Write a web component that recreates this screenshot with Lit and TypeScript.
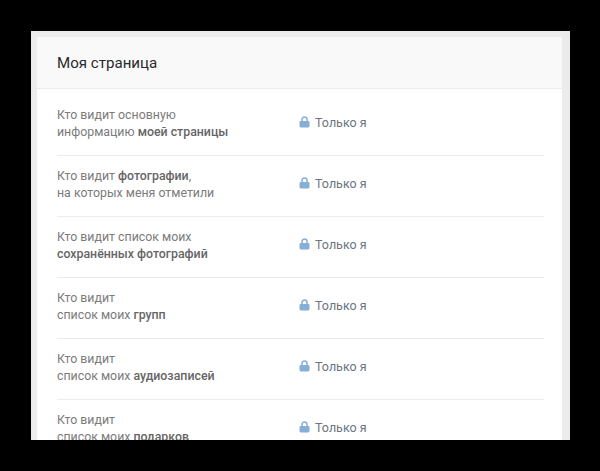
import { LitElement, html, css } from "lit";
import { customElement } from "lit/decorators.js";

const rows = [
  [html`Кто видит основную`, html`информацию <b>моей страницы</b>`],
  [html`Кто видит <b>фотографии</b>,`, html`на которых меня отметили`],
  [html`Кто видит список моих`, html`<b>сохранённых фотографий</b>`],
  [html`Кто видит`, html`список моих <b>групп</b>`],
  [html`Кто видит`, html`список моих <b>аудиозаписей</b>`],
  [html`Кто видит`, html`список моих <b>подарков</b>`],
];

@customElement("app-root")
export class AppRoot extends LitElement {
  static styles = css`
    :host {
      display: block;
      width: 600px;
      height: 471px;
      background: #000;
      box-sizing: border-box;
      padding: 31px 30px 31px 31px;
      font-family: Roboto, "Liberation Sans", sans-serif;
      overflow: hidden;
    }
    .panel {
      height: 409px;
      box-sizing: border-box;
      background: #ececec;
      padding: 6px 8px 0 6px;
      overflow: hidden;
    }
    .card {
      background: #fff;
    }
    .head {
      height: 52px;
      box-sizing: border-box;
      background: #f9f9f9;
      border-bottom: 1px solid #ebebeb;
      padding: 1px 20px 0;
      display: flex;
      align-items: center;
      font-size: 15.1px;
      color: #2a2a2a;
    }
    .list {
      padding: 6px 18px 0 20px;
    }
    .row {
      height: 61px;
      box-sizing: border-box;
      border-bottom: 1px solid #ebebeb;
      display: flex;
      align-items: center;
      padding-bottom: 3px;
    }
    .label {
      width: 242px;
      font-size: 12.35px;
      line-height: 17px;
      color: #7b7b7b;
    }
    .label b {
      font-weight: 500;
      color: #666;
    }
    .value {
      display: flex;
      align-items: center;
      gap: 5px;
      padding-bottom: 2px;
      font-size: 12.5px;
      color: #6b7480;
    }
    svg {
      display: block;
      width: 11px;
      height: 12px;
      margin-bottom: 1px;
    }
  `;

  render() {
    return html`
      <div class="panel">
        <div class="card">
          <div class="head">Моя страница</div>
          <div class="list">
            ${rows.map(
              ([a, b]) => html`
                <div class="row">
                  <div class="label">${a}<br />${b}</div>
                  <div class="value">
                    <svg viewBox="0 0 11 12">
                      <path d="M3 5.5V3.6a2.5 2.5 0 0 1 5 0v1.9" fill="none" stroke="#86aed6" stroke-width="1.5" />
                      <rect x="0.5" y="5" width="10" height="6.5" rx="1.4" fill="#86aed6" />
                    </svg>
                    <span>Только я</span>
                  </div>
                </div>
              `
            )}
          </div>
        </div>
      </div>
    `;
  }
}
